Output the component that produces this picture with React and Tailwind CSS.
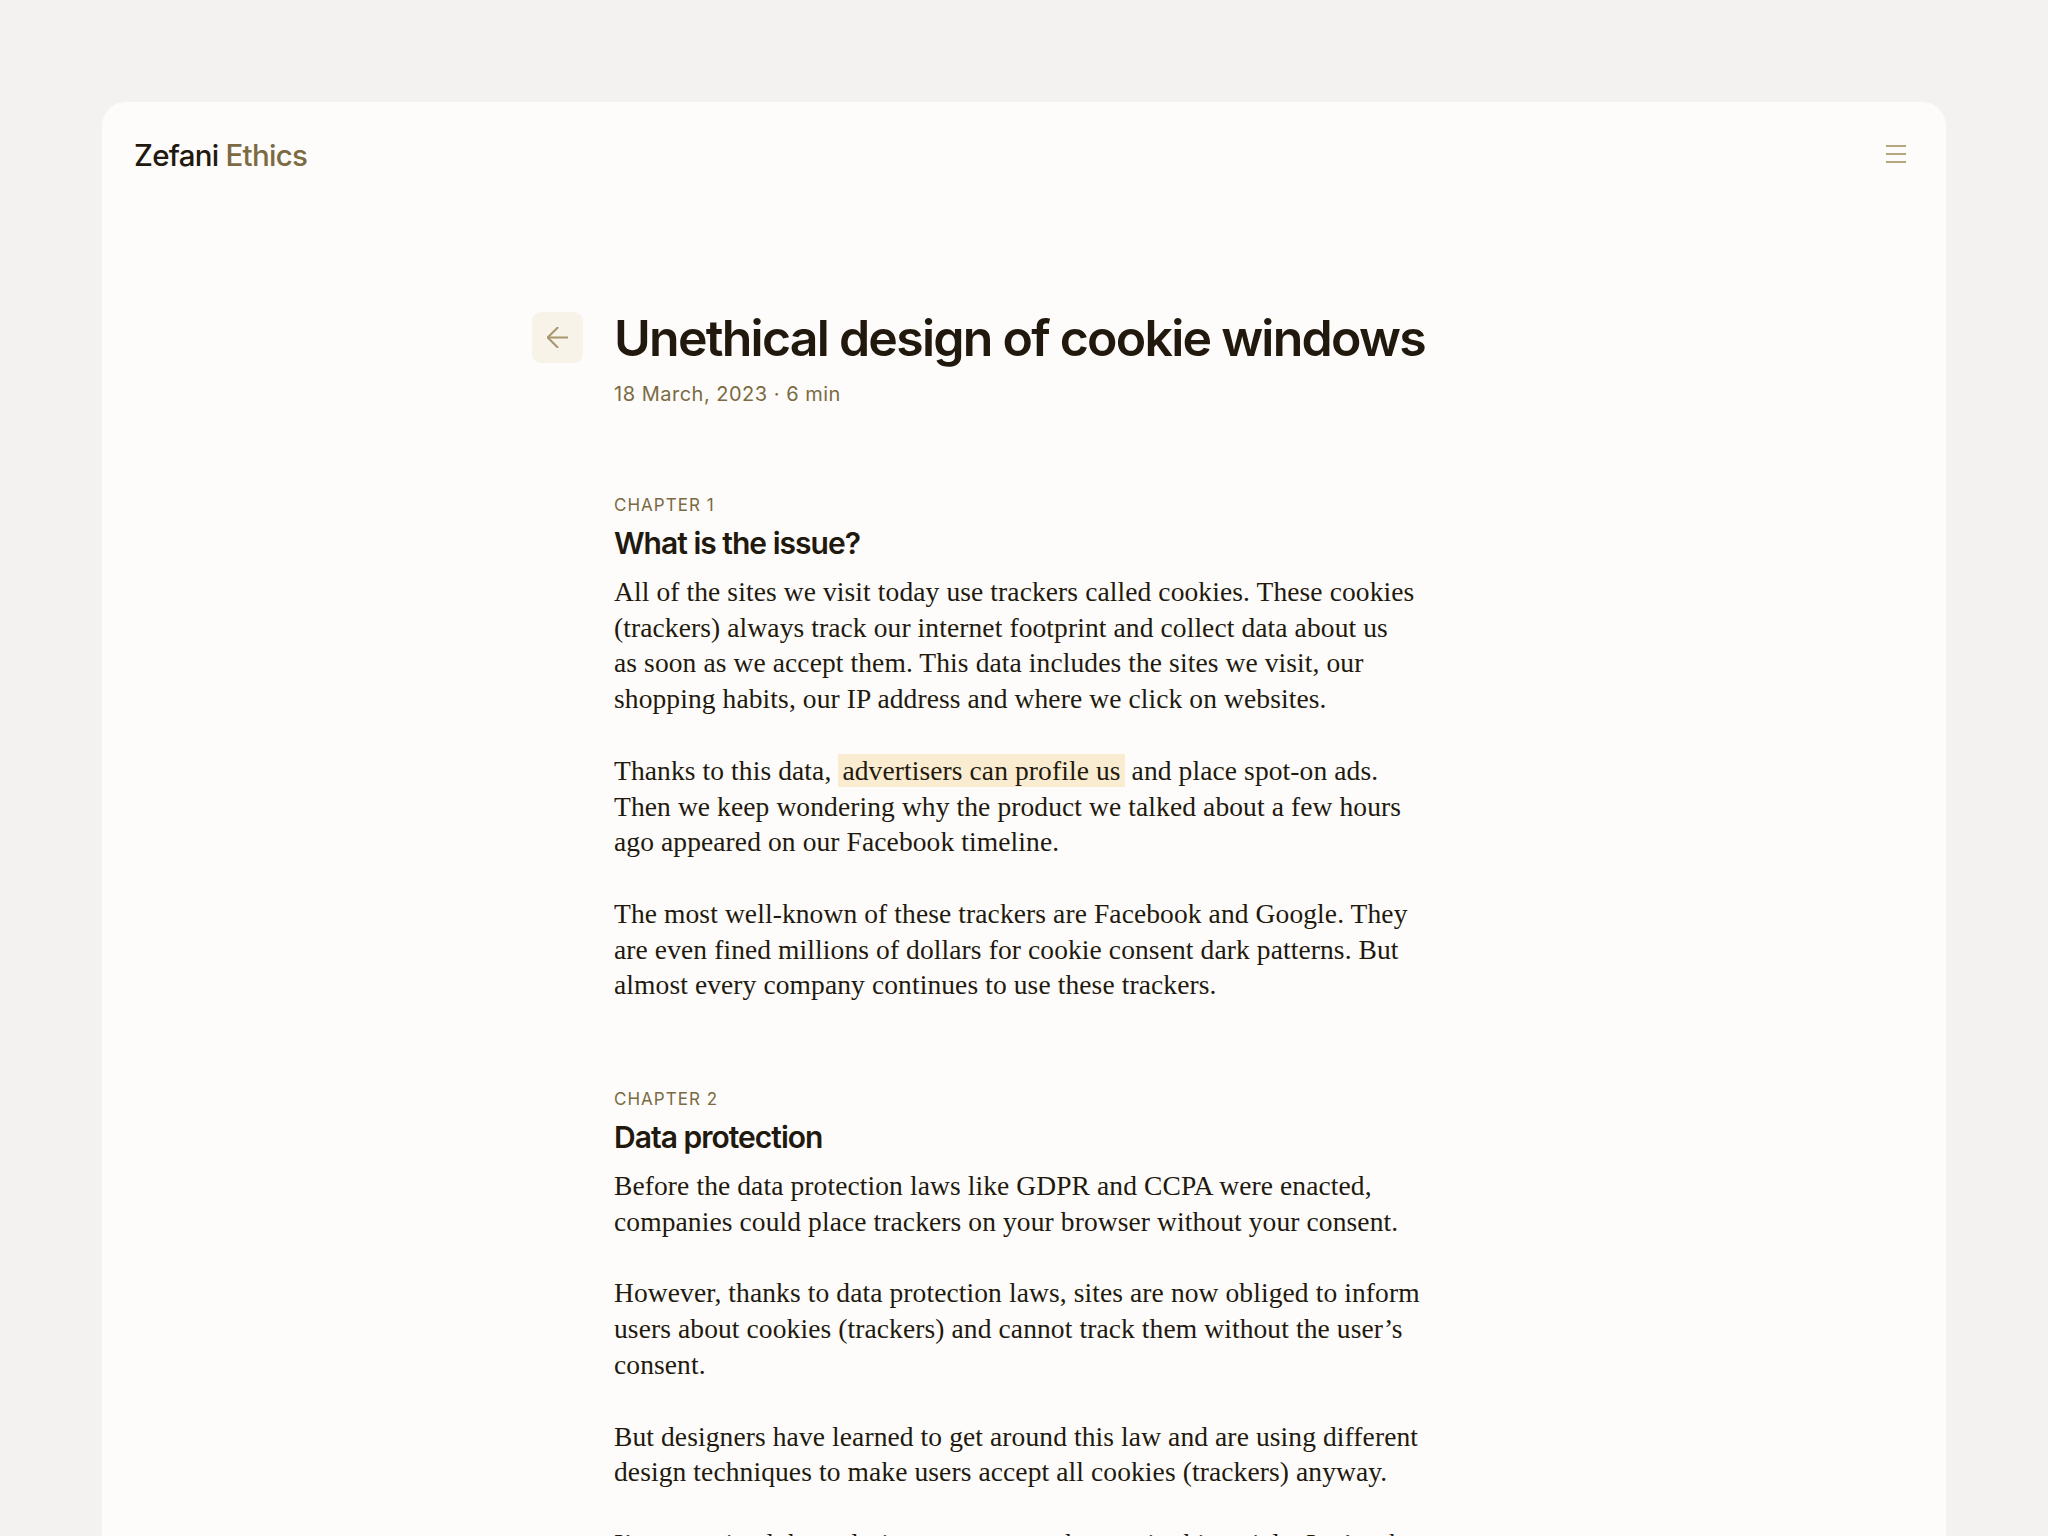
import React from "react";

const serif = { fontFamily: '"Liberation Serif", "Times New Roman", serif' };

function Para({ lines }) {
  return (
    <p className="text-[27.5px] leading-[35.7px] tracking-[0.1px] text-[#22190e] whitespace-nowrap" style={serif}>
      {lines.map((l, i) => (
        <React.Fragment key={i}>
          {l}
          {i < lines.length - 1 && <br />}
        </React.Fragment>
      ))}
    </p>
  );
}

function Chapter({ label, title, className, children }) {
  return (
    <section className={className}>
      <div className="mt-[1px] text-[17px] leading-[24px] tracking-[0.06em] text-[#7b6a42] font-[Inter,sans-serif]">
        {label}
      </div>
      <h2 className="mt-[6px] text-[30px] leading-[40px] font-semibold tracking-[-0.033em] text-[#22190e] font-[Inter,sans-serif]">
        {title}
      </h2>
      <div className="mt-[11px] flex flex-col gap-9">{children}</div>
    </section>
  );
}

export default function App() {
  return (
    <div className="min-h-screen bg-[#f3f2f0] px-[102px] pt-[102px] font-[Inter,sans-serif]">
      <div className="rounded-t-[24px] bg-[#fdfcfa] min-h-[1600px]">
        <header className="h-[104px] pl-8 pr-10 flex items-center justify-between">
          <div className="text-[29.5px] font-medium tracking-[-0.025em] pt-[2px]">
            <span className="text-[#22190e]">Zefani</span>{" "}
            <span className="text-[#7b6a42]">Ethics</span>
          </div>
          <svg width="20" height="18" viewBox="0 0 20 18" fill="none">
            <path d="M0 1h20M0 9h20M0 17h20" stroke="#b6a57f" strokeWidth="1.8" />
          </svg>
        </header>

        <div className="pt-[104px] pl-[430px] flex items-start gap-[31px]">
          <button className="mt-[2px] w-[51px] h-[51px] rounded-[9px] bg-[#f7f3e9] flex items-center justify-center shrink-0">
            <svg width="21" height="21" viewBox="4.5 4.5 15 15" fill="none" stroke="#a8966f" strokeWidth="1.45" strokeLinecap="round" strokeLinejoin="round">
              <path d="M19 12H5" />
              <path d="M12 19l-7-7 7-7" />
            </svg>
          </button>

          <article className="flex flex-col">
            <h1 className="text-[50px] leading-[56px] font-semibold tracking-[-0.035em] text-[#22190e] whitespace-nowrap">
              Unethical design of cookie windows
            </h1>
            <div className="mt-[14px] text-[20px] leading-[28px] tracking-[0.025em] text-[#7b6a42]">
              18 March, 2023 · 6 min
            </div>

            <Chapter label="CHAPTER 1" title="What is the issue?" className="mt-[84px]">
              <Para
                lines={[
                  "All of the sites we visit today use trackers called cookies. These cookies",
                  "(trackers) always track our internet footprint and collect data about us",
                  "as soon as we accept them. This data includes the sites we visit, our",
                  "shopping habits, our IP address and where we click on websites.",
                ]}
              />
              <Para
                lines={[
                  <>
                    Thanks to this data,{" "}
                    <span className="bg-[#f9ecd1] px-[4px] py-[1px]">advertisers can profile us</span> and place
                    spot-on ads.
                  </>,
                  "Then we keep wondering why the product we talked about a few hours",
                  "ago appeared on our Facebook timeline.",
                ]}
              />
              <Para
                lines={[
                  "The most well-known of these trackers are Facebook and Google. They",
                  "are even fined millions of dollars for cookie consent dark patterns. But",
                  "almost every company continues to use these trackers.",
                ]}
              />
            </Chapter>

            <Chapter label="CHAPTER 2" title="Data protection" className="mt-[83px]">
              <Para
                lines={[
                  "Before the data protection laws like GDPR and CCPA were enacted,",
                  "companies could place trackers on your browser without your consent.",
                ]}
              />
              <Para
                lines={[
                  "However, thanks to data protection laws, sites are now obliged to inform",
                  "users about cookies (trackers) and cannot track them without the user’s",
                  "consent.",
                ]}
              />
              <Para
                lines={[
                  "But designers have learned to get around this law and are using different",
                  "design techniques to make users accept all cookies (trackers) anyway.",
                ]}
              />
              <Para
                lines={[
                  "I’ve examined these design patterns one by one in this article. Let’s take a",
                  "look at them.",
                ]}
              />
            </Chapter>
          </article>
        </div>
      </div>
    </div>
  );
}
